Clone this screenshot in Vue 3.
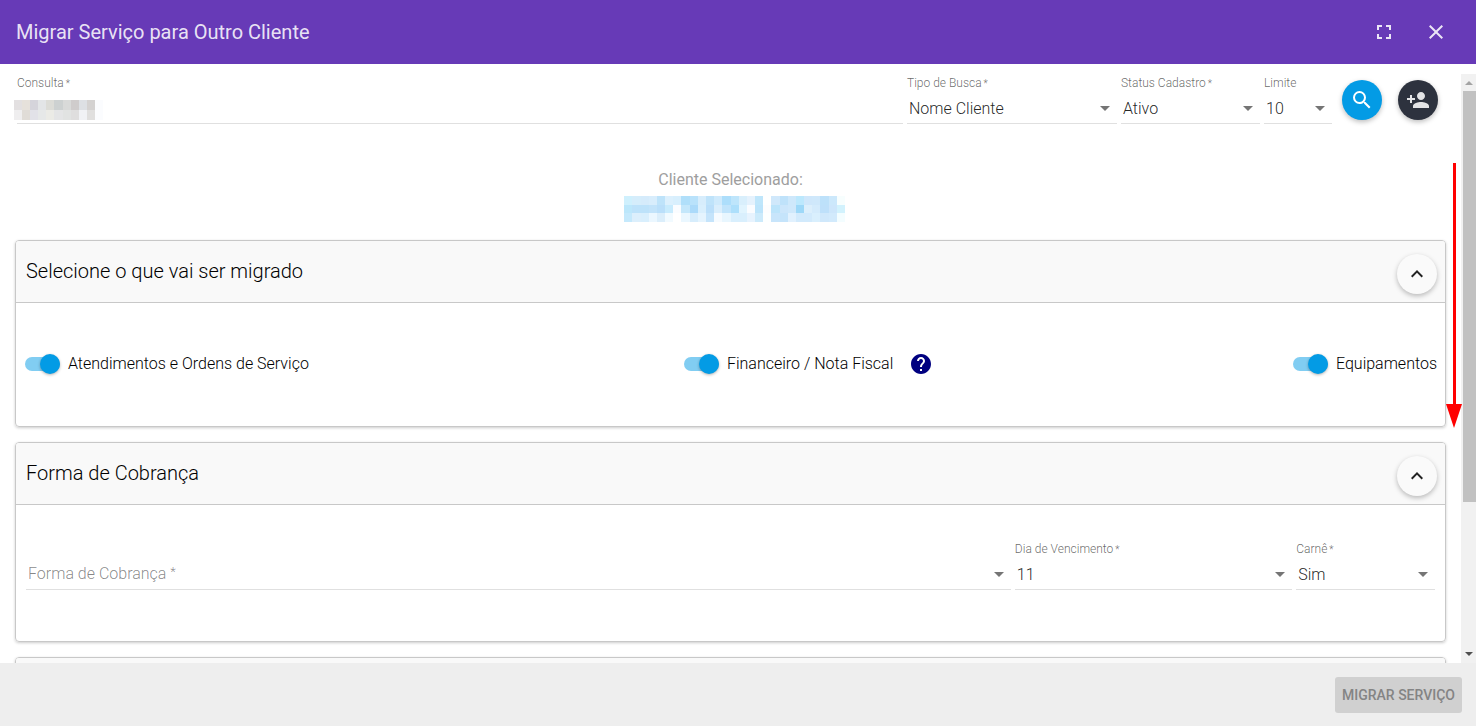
<script setup>
import { ref } from 'vue'

const busca = ref('Nome Cliente')
const status = ref('Ativo')
const limite = ref('10')
const forma = ref('')
const dia = ref('11')
const carne = ref('Sim')
const atendimentos = ref(true)
const financeiro = ref(true)
const equipamentos = ref(true)

// Redacted values, drawn as colour cells row by row
const consultaMask = [
  ['#e3e0e1', '#e6e1db', '#d5d4db', '#e3e5e7', '#dcdcd7', '#cdd1d1', '#d9dad9', '#cfcccc', '#dde0e4', '#d4d2d1', '#fbfcfe'],
  ['#efeeef', '#e0dcd7', '#e2e2e8', '#e6e8e8', '#ebebe6', '#e4e5e6', '#e1e3e2', '#dfdede', '#f1f2f5', '#e0dfde', '#fbfcfe']
]
const clienteMask = [
  ['#cff0fd', '#d5edfb', '#d5ebfb', '#d8edfc', '#bee3fa', '#dcf0fd', '#d8effd', '#b0dffa', '#b9e2fb', '#d7edfc', '#bfe3fa', '#cfeafc', '#addefb', '#bee5fb', '#d9effc', '#e5f2fd', '#bfe6fb', '#ffffff', '#d0e8fb', '#bfe2fa', '#cee8fb', '#bce8fd', '#cfe7fb', '#cfe8fb', '#bde1fa', '#cce8fb', '#f7fefe'],
  ['#bce7fb', '#bde2fa', '#bde2fa', '#c2e3fa', '#badffa', '#c8ebfd', '#fafcff', '#c4e7fb', '#abdafa', '#d9effd', '#bbdffa', '#daeefc', '#c1e4fb', '#addffb', '#e1f4fe', '#fafcff', '#bce4fb', '#fdfdfe', '#bce4fb', '#cce6fb', '#cfe8fb', '#9dd8f8', '#dceffc', '#d4ebfc', '#bee0fa', '#cde6fb', '#d2f2fd'],
  ['#c5e9fc', '#dceffc', '#d9effd', '#ebf7ff', '#dbeefb', '#f1faff', '#ffffff', '#eaf7ff', '#d7edfc', '#e5f4fe', '#c5e4fb', '#f6fbff', '#e8f6fe', '#d9effd', '#d9effd', '#e7f3fe', '#cceafb', '#fdffff', '#c8e5fb', '#c5e4fb', '#e1f1fe', '#d2eafc', '#d2eafc', '#d9effd', '#d0e8fb', '#d2eafc', '#f3fdff']
]
</script>

<template>
  <main class="dialog">
    <header class="toolbar">
      <h1>Migrar Serviço para Outro Cliente</h1>
      <button class="tool" type="button" aria-label="Tela cheia">
        <svg viewBox="0 0 24 24"><path d="M5 5h5v2H7v3H5V5m9 0h5v5h-2V7h-3V5m3 9h2v5h-5v-2h3v-3m-7 3v2H5v-5h2v3h3z" /></svg>
      </button>
      <button class="tool" type="button" aria-label="Fechar">
        <svg viewBox="0 0 24 24"><path d="M19 6.41L17.59 5 12 10.59 6.41 5 5 6.41 10.59 12 5 17.59 6.41 19 12 13.41 17.59 19 19 17.59 13.41 12z" /></svg>
      </button>
    </header>

    <div class="middle">
      <div class="content">
        <form class="search" @submit.prevent>
          <div class="search-fields">
            <div class="field">
              <label for="consulta">Consulta <small>*</small></label>
              <div class="control">
                <input id="consulta" type="text" />
                <svg class="consulta-mask" viewBox="0 0 11 2" preserveAspectRatio="none" shape-rendering="crispEdges">
                  <template v-for="(row, y) in consultaMask" :key="y">
                    <rect v-for="(c, x) in row" :key="x" :x="x" :y="y" width="1" height="1" :fill="c" />
                  </template>
                </svg>
              </div>
            </div>
            <div class="field">
              <label for="busca">Tipo de Busca <small>*</small></label>
              <div class="control arrow">
                <select id="busca" v-model="busca"><option>Nome Cliente</option></select>
              </div>
            </div>
            <div class="field">
              <label for="status">Status Cadastro <small>*</small></label>
              <div class="control arrow">
                <select id="status" v-model="status"><option>Ativo</option></select>
              </div>
            </div>
            <div class="field">
              <label for="limite">Limite</label>
              <div class="control arrow">
                <select id="limite" v-model="limite"><option>10</option></select>
              </div>
            </div>
          </div>
          <div class="search-actions">
            <button class="round blue" type="submit" aria-label="Buscar">
              <svg viewBox="0 0 24 24"><path d="M15.5 14h-.79l-.28-.27A6.47 6.47 0 0 0 16 9.5 6.5 6.5 0 1 0 9.5 16c1.61 0 3.09-.59 4.23-1.57l.27.28v.79l5 4.99L20.49 19l-4.99-5zm-6 0C7.01 14 5 11.99 5 9.5S7.01 5 9.5 5 14 7.01 14 9.5 11.99 14 9.5 14z" /></svg>
            </button>
            <button class="round dark" type="button" aria-label="Adicionar cliente">
              <svg viewBox="0 0 24 24"><path d="M15 12c2.21 0 4-1.79 4-4s-1.79-4-4-4-4 1.79-4 4 1.79 4 4 4zm-9-2V7H4v3H1v2h3v3h2v-3h3v-2H6zm9 4c-2.67 0-8 1.34-8 4v2h16v-2c0-2.66-5.33-4-8-4z" /></svg>
            </button>
          </div>
        </form>

        <section class="cliente">
          <p>Cliente Selecionado:</p>
          <svg class="cliente-mask" viewBox="-1 0 28 3" preserveAspectRatio="none" shape-rendering="crispEdges">
            <template v-for="(row, y) in clienteMask" :key="y">
              <rect v-for="(c, x) in row" :key="x" :x="x" :y="y" width="1" height="1" :fill="c" />
            </template>
          </svg>
        </section>

        <section class="card">
          <header class="card-head">
            <h2>Selecione o que vai ser migrado</h2>
            <button class="round light" type="button" aria-label="Recolher">
              <svg viewBox="0 0 24 24"><path d="M7.41 15.41L12 10.83l4.59 4.58L18 14l-6-6-6 6z" /></svg>
            </button>
          </header>
          <div class="switches">
            <label class="switch"><input v-model="atendimentos" type="checkbox" />Atendimentos e Ordens de Serviço</label>
            <div class="switch-pair">
              <div class="with-help">
                <label class="switch"><input v-model="financeiro" type="checkbox" />Financeiro / Nota Fiscal</label>
                <button class="help" type="button" aria-label="Ajuda">
                  <svg viewBox="0 0 24 24"><path d="M12 2C6.48 2 2 6.48 2 12s4.48 10 10 10 10-4.48 10-10S17.52 2 12 2zm1 17h-2v-2h2v2zm2.07-7.75l-.9.92C13.45 12.9 13 13.5 13 15h-2v-.5c0-1.1.45-2.1 1.17-2.83l1.24-1.26c.37-.36.59-.86.59-1.41 0-1.1-.9-2-2-2s-2 .9-2 2H8c0-2.21 1.79-4 4-4s4 1.79 4 4c0 .88-.36 1.68-.93 2.25z" /></svg>
                </button>
              </div>
              <label class="switch"><input v-model="equipamentos" type="checkbox" />Equipamentos</label>
            </div>
          </div>
        </section>

        <section class="card">
          <header class="card-head">
            <h2>Forma de Cobrança</h2>
            <button class="round light" type="button" aria-label="Recolher">
              <svg viewBox="0 0 24 24"><path d="M7.41 15.41L12 10.83l4.59 4.58L18 14l-6-6-6 6z" /></svg>
            </button>
          </header>
          <div class="billing">
            <div class="field">
              <div class="control arrow">
                <label class="placeholder" for="forma">Forma de Cobrança <small>*</small></label>
                <select id="forma" v-model="forma"><option value=""></option></select>
              </div>
            </div>
            <div class="field">
              <label for="dia">Dia de Vencimento <small>*</small></label>
              <div class="control arrow">
                <select id="dia" v-model="dia"><option>11</option></select>
              </div>
            </div>
            <div class="field">
              <label for="carne">Carnê <small>*</small></label>
              <div class="control arrow">
                <select id="carne" v-model="carne"><option>Sim</option></select>
              </div>
            </div>
          </div>
        </section>

        <section class="card"><header class="card-head"></header></section>
      </div>

      <div class="scrollbar" aria-hidden="true">
        <svg class="up" viewBox="0 0 15 17"><path d="M4 11h8L8 7z" /></svg>
        <div class="track"><div class="thumb"></div></div>
        <svg class="down" viewBox="0 0 15 17"><path d="M4 6h8l-4 4z" /></svg>
      </div>

      <svg class="pointer" viewBox="0 0 16 266" aria-hidden="true">
        <path d="M7 0h3v242H7z" /><path d="M0 241h16L8 265z" />
      </svg>
    </div>

    <footer class="footer">
      <button class="submit" type="button" disabled>Migrar Serviço</button>
    </footer>
  </main>
</template>

<style>
body { margin: 0; }
</style>

<style scoped>
* { box-sizing: border-box; }
.dialog {
  display: flex;
  flex-direction: column;
  height: 100vh;
  overflow: hidden;
  background: #fff;
  color: rgba(0, 0, 0, .87);
  font: 300 16px/20px Roboto, sans-serif;
}
button, input, select { font: inherit; color: inherit; border: 0; padding: 0; margin: 0; outline: 0; background: none; }
svg { display: block; fill: currentColor; }
h1, h2, p { margin: 0; }

.toolbar {
  display: flex;
  flex: none;
  align-items: center;
  gap: 12px;
  height: 64px;
  padding: 0 20px 0 16px;
  background: #673ab7;
  color: rgba(255, 255, 255, .87);
}
.toolbar h1 { flex: 1; font-size: 20px; font-weight: 400; line-height: 24px; }
.tool { display: grid; place-items: center; width: 40px; height: 40px; }
.tool svg { width: 24px; height: 24px; }

.middle { position: relative; display: flex; flex: 1; min-height: 0; }
.content { flex: 1; min-width: 0; padding: 0 15px; overflow: hidden; }

.search { display: flex; gap: 10px; padding: 0 8px 0 2px; }
.search-fields { display: grid; flex: 1; grid-template-columns: 1fr 210px 139px 68px; gap: 4px; padding-top: 11px; }
.search-actions { display: flex; gap: 16px; padding-top: 16px; }

.field { display: flex; flex-direction: column; justify-content: flex-end; min-width: 0; }
.field > label { height: 16px; font-size: 12px; line-height: 16px; color: rgba(0, 0, 0, .6); white-space: nowrap; }
.field > label small { font-size: 10px; line-height: 10px; margin-left: -1px; }
.control { position: relative; border-bottom: 1px solid rgba(0, 0, 0, .12); }
.control input, .control select { display: block; width: 100%; height: 32px; padding: 4px 2px 0; appearance: none; }
.arrow::after {
  content: '';
  position: absolute;
  top: 15px;
  right: 7px;
  border: 5px solid transparent;
  border-top-color: #757575;
  border-bottom: 0;
  pointer-events: none;
}
.placeholder { position: absolute; top: 7px; left: 2px; color: rgba(0, 0, 0, .48); }
.placeholder small { font-size: 13px; line-height: 16px; vertical-align: top; }
.consulta-mask { position: absolute; top: 9px; left: -3px; width: 89px; height: 20px; }

.round { display: grid; place-items: center; flex: none; width: 40px; height: 40px; border-radius: 50%; box-shadow: 0 2px 5px rgba(0, 0, 0, .26); }
.round svg { width: 24px; height: 24px; }
.blue { background: #039be5; color: #fff; }
.dark { background: #2d323e; color: rgba(255, 255, 255, .87); }
.light { background: #fafafa; color: rgba(0, 0, 0, .87); }

.cliente { display: flex; flex-direction: column; align-items: center; gap: 6px; padding: 46px 0 18px; color: #9e9e9e; font-weight: 400; }
.cliente-mask { width: 229px; height: 26px; }

.card { margin-bottom: 15px; border: 1px solid #c8c8c8; border-radius: 4px; box-shadow: 0 1px 3px rgba(0, 0, 0, .2); }
.card-head {
  display: flex;
  align-items: flex-start;
  justify-content: space-between;
  height: 62px;
  padding: 13px 8px 0 10px;
  border-bottom: 1px solid #c8c8c8;
  border-radius: 3px 3px 0 0;
  background: #f9f9f9;
}
.card-head h2 { padding-top: 5px; font-size: 20px; font-weight: 300; line-height: 24px; color: #000; }

.switches { display: grid; grid-template-columns: 7fr 8fr; padding: 51px 8px 52px 9px; color: #000; }
.switch-pair { display: flex; justify-content: space-between; }
.switch { display: flex; align-items: center; gap: 8px; white-space: nowrap; }
.switch input {
  position: relative;
  appearance: none;
  width: 35px;
  height: 14px;
  border-radius: 7px;
  background: rgba(3, 155, 229, .5);
}
.switch input::after {
  content: '';
  position: absolute;
  top: -3px;
  left: 0;
  width: 20px;
  height: 20px;
  border-radius: 50%;
  background: #bdbdbd;
  box-shadow: 0 1px 3px rgba(0, 0, 0, .3);
}
.switch input:checked::after { left: 15px; background: #039be5; }
.with-help { display: flex; align-items: center; gap: 16px; height: 20px; }
.help { color: #000080; }
.help svg { width: 24px; height: 24px; }

.billing { display: grid; grid-template-columns: 71fr 20fr 10fr; gap: 4px; padding: 36px 10px 51px; }

.scrollbar { display: flex; flex: none; flex-direction: column; width: 15px; margin-top: 10px; background: #f1f1f1; }
.scrollbar svg { width: 15px; height: 17px; }
.up { color: #a3a3a3; }
.down { color: #505050; }
.track { flex: 1; padding-left: 2px; }
.thumb { height: 74%; background: #c1c1c1; }
.pointer { position: absolute; top: 99px; right: 14px; width: 16px; height: 266px; color: #f00; }

.footer { display: flex; flex: none; align-items: center; justify-content: flex-end; height: 63px; padding: 0 14px; background: #eee; }
.submit { height: 36px; padding: 0 7px; border-radius: 3px; background: #d0d0d0; color: #848484; font-size: 14px; font-weight: 500; text-transform: uppercase; }
</style>
